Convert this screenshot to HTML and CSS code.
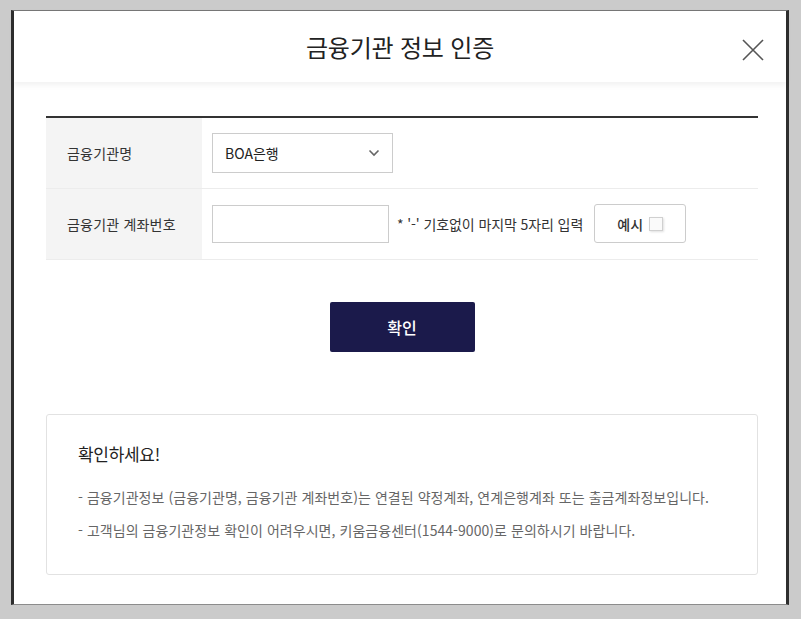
FILE: index.html
```html
<!DOCTYPE html>
<html lang="ko">
  <head>
    <meta charset="UTF-8" />
    <meta name="viewport" content="width=device-width, initial-scale=1.0" />
    <title>금융기관 정보 인증</title>
    <link rel="stylesheet" href="styles.css">
  </head>
  <body>
    <div class="modal">
      <div class="modal-head">
        <h1 class="modal-title">금융기관 정보 인증</h1>
        <button class="btn-close" aria-label="닫기">
          <svg width="22" height="22" viewBox="0 0 22 22">
            <path d="M1 1 L21 21 M21 1 L1 21" stroke="#555" stroke-width="1.6" fill="none" />
          </svg>
        </button>
      </div>

      <div class="modal-body">
        <table class="form-table">
          <tr>
            <th>금융기관명</th>
            <td>
              <div class="select-box">
                <span>BOA은행</span>
                <svg width="12" height="8" viewBox="0 0 12 8">
                  <path d="M1.5 1.5 L6 6 L10.5 1.5" stroke="#666" stroke-width="1.6" fill="none" />
                </svg>
              </div>
            </td>
          </tr>
          <tr>
            <th>금융기관 계좌번호</th>
            <td>
              <div class="acct-row">
                <input class="acct-input" type="text" />
                <span class="hint">* '-' 기호없이 마지막 5자리 입력</span>
                <button class="btn-sample">예시 <i class="sample-icon"></i></button>
              </div>
            </td>
          </tr>
        </table>

        <div class="btn-area">
          <button class="btn-confirm">확인</button>
        </div>

        <div class="notice">
          <h2 class="notice-title">확인하세요!</h2>
          <p>- 금융기관정보 (금융기관명, 금융기관 계좌번호)는 연결된 약정계좌, 연계은행계좌 또는 출금계좌정보입니다.</p>
          <p>- 고객님의 금융기관정보 확인이 어려우시면, 키움금융센터(1544-9000)로 문의하시기 바랍니다.</p>
        </div>
      </div>
    </div>
  </body>
</html>
```

FILE: styles.css
```css
* {
  box-sizing: border-box;
}
body {
  margin: 0;
  background-color: #cbcbcb;
  font-family: "Noto Sans CJK KR", "Noto Sans", sans-serif;
  color: #222;
}
.modal {
  margin: 10px 0 0 11px;
  width: 778px;
  height: 595px;
  background-color: #fff;
  border-left: 3px solid #2e2e2e;
  border-right: 3px solid #2e2e2e;
  border-top: 1px solid #777;
  border-bottom: 1px solid #8c8c8c;
}
.modal-head {
  position: relative;
  height: 71px;
  display: flex;
  align-items: center;
  justify-content: center;
  box-shadow: 0 3px 6px rgba(0, 0, 0, 0.06);
}
.modal-title {
  margin: 0;
  font-size: 24px;
  font-weight: 400;
  color: #222;
  letter-spacing: -0.2px;
}
.btn-close {
  position: absolute;
  right: 22px;
  top: 28px;
  padding: 0;
  border: none;
  background: none;
  width: 22px;
  height: 22px;
}
.modal-body {
  padding: 34px 28px 0 32px;
}
.form-table {
  width: 100%;
  border-collapse: collapse;
  border-top: 2px solid #333;
}
.form-table th {
  width: 156px;
  height: 71px;
  background-color: #f4f4f4;
  text-align: left;
  padding-left: 21px;
  font-size: 14px;
  font-weight: 400;
  color: #333;
  letter-spacing: 0.2px;
  border-bottom: 1px solid #ececec;
}
.form-table td {
  padding-left: 10px;
  border-bottom: 1px solid #ececec;
}
.select-box {
  width: 181px;
  height: 40px;
  border: 1px solid #ccc;
  display: flex;
  align-items: center;
  justify-content: space-between;
  padding: 0 12px 0 12px;
  font-size: 14px;
  color: #222;
}
.acct-row {
  display: flex;
  align-items: center;
}
.acct-input {
  width: 177px;
  height: 38px;
  border: 1px solid #ccc;
  outline: none;
}
.hint {
  margin-left: 8px;
  font-size: 14px;
  color: #333;
  letter-spacing: -0.1px;
}
.btn-sample {
  margin-left: 11px;
  width: 92px;
  height: 39px;
  border: 1px solid #ccc;
  border-radius: 3px;
  background: #fff;
  font-family: inherit;
  font-size: 14px;
  font-weight: 500;
  color: #333;
  display: flex;
  align-items: center;
  justify-content: center;
  gap: 6px;
}
.sample-icon {
  display: inline-block;
  width: 14px;
  height: 14px;
  border: 1px solid #d0d0d0;
  box-shadow: 1px 1px 2px rgba(0, 0, 0, 0.12);
  background: #fafafa;
}
.btn-area {
  display: flex;
  justify-content: center;
  margin-top: 42px;
}
.btn-confirm {
  width: 145px;
  height: 50px;
  border: none;
  border-radius: 2px;
  background-color: #1b1a4b;
  color: #fff;
  font-family: inherit;
  font-size: 16px;
  font-weight: 500;
}
.notice {
  margin-top: 62px;
  height: 161px;
  border: 1px solid #e2e2e2;
  border-radius: 3px;
  padding: 26px 31px 0 31px;
}
.notice-title {
  margin: 0 0 21px;
  font-size: 17px;
  font-weight: 400;
  color: #222;
  letter-spacing: -0.3px;
}
.notice p {
  margin: 0 0 13px;
  font-size: 14px;
  line-height: 20px;
  color: #666;
  letter-spacing: 0.05px;
}
```
